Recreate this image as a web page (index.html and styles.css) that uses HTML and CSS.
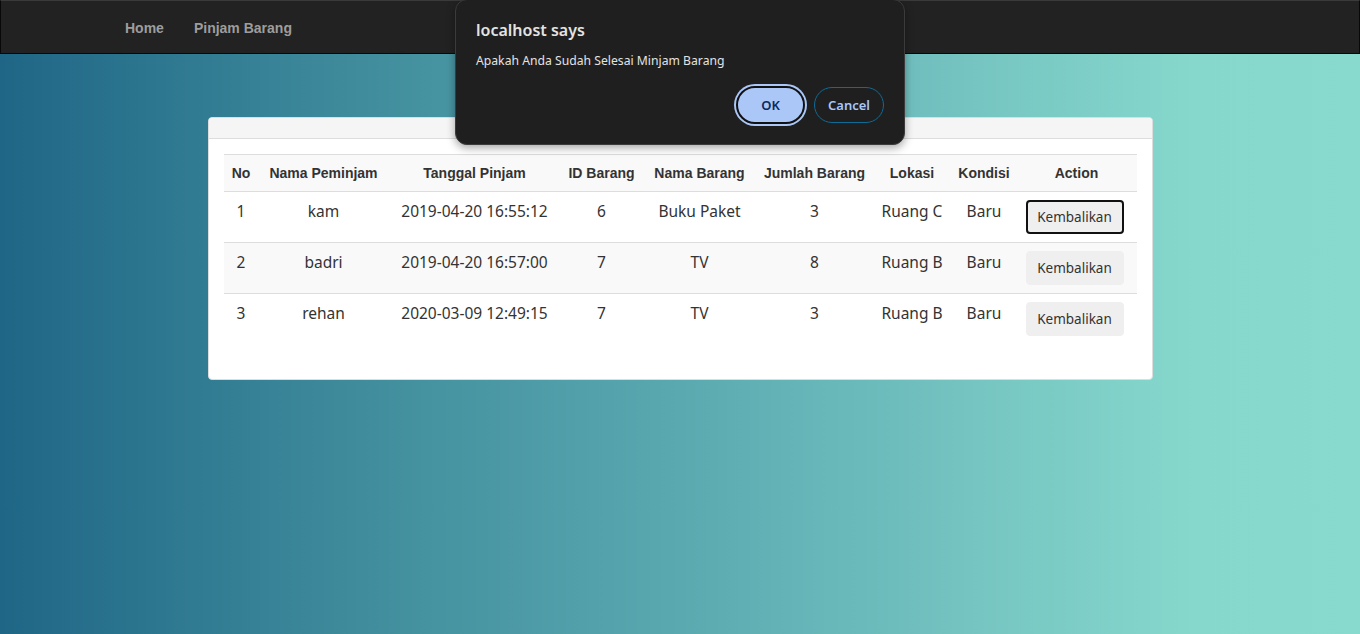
FILE: index.html
```html
<!DOCTYPE html>
<html lang="id">
<head>
<meta charset="utf-8">
<title>Data Peminjaman</title>
<link rel="stylesheet" href="styles.css">
</head>
<body>
<nav class="navbar">
  <div class="nav-inner">
    <a class="nav-link" href="#">Home</a>
    <a class="nav-link" href="#">Pinjam Barang</a>
  </div>
</nav>

<main class="page">
  <section class="panel">
    <div class="panel-heading"></div>
    <div class="panel-body">
      <table class="data-table">
        <colgroup>
          <col class="c-no"><col class="c-nama"><col class="c-tgl"><col class="c-id"><col class="c-barang"><col class="c-jumlah"><col class="c-lokasi"><col class="c-kondisi"><col class="c-action">
        </colgroup>
        <tbody>
          <tr class="head-row">
            <th>No</th><th>Nama Peminjam</th><th>Tanggal Pinjam</th><th>ID Barang</th><th>Nama Barang</th><th>Jumlah Barang</th><th>Lokasi</th><th>Kondisi</th><th>Action</th>
          </tr>
          <tr>
            <td>1</td><td>kam</td><td>2019-04-20 16:55:12</td><td>6</td><td>Buku Paket</td><td>3</td><td>Ruang C</td><td>Baru</td>
            <td><button class="btn btn-focus" type="button">Kembalikan</button></td>
          </tr>
          <tr class="striped">
            <td>2</td><td>badri</td><td>2019-04-20 16:57:00</td><td>7</td><td>TV</td><td>8</td><td>Ruang B</td><td>Baru</td>
            <td><button class="btn" type="button">Kembalikan</button></td>
          </tr>
          <tr>
            <td>3</td><td>rehan</td><td>2020-03-09 12:49:15</td><td>7</td><td>TV</td><td>3</td><td>Ruang B</td><td>Baru</td>
            <td><button class="btn" type="button">Kembalikan</button></td>
          </tr>
        </tbody>
      </table>
    </div>
  </section>
</main>

<div class="dialog" role="dialog">
  <div class="dialog-title">localhost says</div>
  <div class="dialog-message">Apakah Anda Sudah Selesai Minjam Barang</div>
  <div class="dialog-actions">
    <button class="dbtn dbtn-ok" type="button">OK</button>
    <button class="dbtn dbtn-cancel" type="button">Cancel</button>
  </div>
</div>
</body>
</html>
```
FILE: styles.css
```css
* { box-sizing: border-box; }

html, body { margin: 0; padding: 0; }

body {
  min-height: 634px;
  font-family: "Noto Sans", "DejaVu Sans", sans-serif;
  font-size: 15.5px;
  color: #333;
  background: linear-gradient(to right, #1f6686 0%, #3e8a9b 25%, #5aa9b0 50%, #76c5c2 72%, #86d8cc 88%, #88d9ce 100%);
}

.navbar {
  height: 54px;
  background: #222;
  border: 1px solid #080808;
  border-top-color: #3a3a3a;
}

.nav-inner {
  width: 1170px;
  margin: 0 auto;
  padding-left: 15px;
  display: flex;
  height: 100%;
  align-items: center;
}

.nav-link {
  font-family: "Liberation Sans", Arial, sans-serif;
  font-weight: bold;
  font-size: 14px;
  color: #9d9d9d;
  text-decoration: none;
  padding: 0 15px;
  line-height: 20px;
  margin-top: 1px;
}

.page {
  padding-top: 63px;
}

.panel {
  width: 945px;
  margin: 0 auto;
  background: #fff;
  border: 1px solid #ddd;
  border-radius: 4px;
  overflow: hidden;
}

.panel-heading {
  height: 21px;
  background: #f5f5f5;
  border-bottom: 1px solid #ddd;
}

.panel-body {
  padding: 15px;
}

.data-table {
  width: 913px;
  table-layout: fixed;
  border-collapse: collapse;
  margin-bottom: 20px;
}

.c-no { width: 35px; }
.c-nama { width: 130px; }
.c-tgl { width: 172px; }
.c-id { width: 82px; }
.c-barang { width: 114px; }
.c-jumlah { width: 116px; }
.c-lokasi { width: 79px; }
.c-kondisi { width: 65px; }
.c-action { width: 120px; }

.data-table th,
.data-table td {
  border-top: 1px solid #ddd;
  padding: 8px 0;
  text-align: center;
  vertical-align: top;
  line-height: 20px;
  white-space: nowrap;
}

.data-table th {
  font-family: "Liberation Sans", Arial, sans-serif;
  font-weight: bold;
  font-size: 14px;
  color: #333;
}

.head-row,
.striped {
  background: #f9f9f9;
}

.data-table td {
  padding-top: 9px;
}

.data-table td:last-child {
  padding-top: 8px;
  padding-right: 4px;
}

.btn {
  font-family: "Noto Sans", "DejaVu Sans", sans-serif;
  font-size: 13.5px;
  color: #333;
  background: #efefef;
  border: 1px solid #efefef;
  border-radius: 4px;
  height: 34px;
  width: 98px;
  padding: 0;
  line-height: 20px;
}

.btn-focus {
  border: 2px solid #111;
  box-shadow: 0 0 0 1px #fff;
}

.dialog {
  position: absolute;
  left: 455px;
  top: -1px;
  width: 450px;
  height: 146px;
  background: #1f1f1f;
  border: 1px solid #3b3b3b;
  border-radius: 12px;
  box-shadow: 0 3px 8px rgba(0,0,0,0.35);
  padding: 19px 20px 0 20px;
  font-family: "Noto Sans", "Open Sans", sans-serif;
  color: #e3e3e3;
}

.dialog-title {
  font-size: 16px;
  font-weight: 600;
  line-height: 22px;
}

.dialog-message {
  margin-top: 11px;
  font-size: 12.2px;
  line-height: 18px;
}

.dialog-actions {
  display: flex;
  justify-content: flex-end;
  align-items: center;
  gap: 9px;
  margin-top: 16px;
}

.dbtn {
  font-family: "Noto Sans", "Open Sans", sans-serif;
  font-size: 13px;
  font-weight: 600;
  border-radius: 20px;
  height: 36px;
  padding: 0;
  cursor: pointer;
}

.dbtn-ok {
  width: 69px;
  height: 38px;
  background: #aac7f8;
  color: #0b2a5c;
  border: 2px solid #111;
  box-shadow: 0 0 0 2px #aac7f8;
}

.dbtn-cancel {
  width: 70px;
  background: transparent;
  color: #a8c7fa;
  border: 1px solid #0f6a96;
}
```
